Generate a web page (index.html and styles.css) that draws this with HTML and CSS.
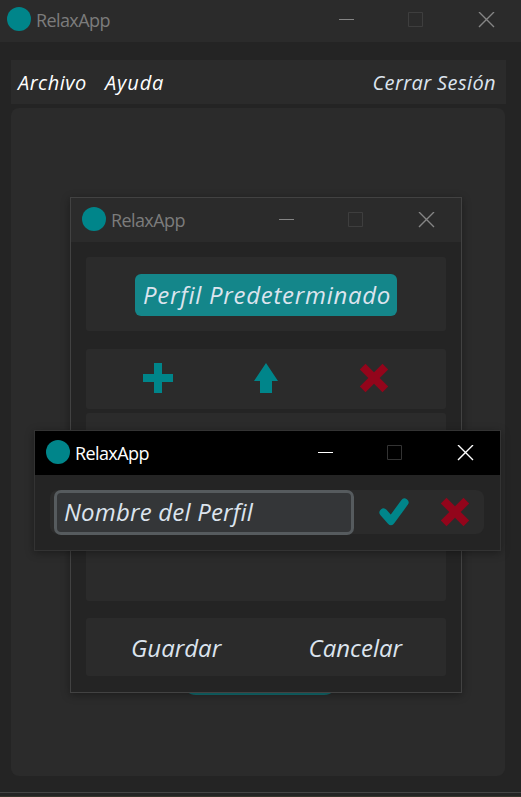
FILE: index.html
```html
<!DOCTYPE html>
<html lang="es">
<head>
<meta charset="utf-8">
<title>RelaxApp</title>
<link rel="stylesheet" href="styles.css">
</head>
<body>
<div class="desktop">
  <section class="main-window">
    <header class="titlebar">
      <span class="logo"></span><span class="title">RelaxApp</span>
      <svg class="controls" width="156" height="16" viewBox="0 0 156 16"><path d="M0 7.500h15"/><path class="maximize" d="M69.500 .5h14v14h-14z"/><path class="close" d="M140 0l15 15M155 0l-15 15"/></svg>
    </header>
    <nav class="menubar">
      <span class="menu-item archivo">Archivo</span>
      <span class="menu-item ayuda">Ayuda</span>
      <span class="menu-item logout">Cerrar Sesión</span>
    </nav>
    <main class="content"><span class="main-button"></span></main>
    <footer class="taskbar"></footer>
  </section>

  <section class="window profiles">
    <header class="titlebar">
      <span class="logo"></span><span class="title">RelaxApp</span>
      <svg class="controls" width="156" height="16" viewBox="0 0 156 16"><path d="M0 7.500h15"/><path class="maximize" d="M69.500 .5h14v14h-14z"/><path class="close" d="M140 0l15 15M155 0l-15 15"/></svg>
    </header>
    <div class="profiles-body">
      <div class="panel current"><span class="profile-chip"><span class="profile-name">Perfil Predeterminado</span></span></div>
      <div class="panel tools">
        <svg width="30" height="30" viewBox="0 0 30 30"><path class="teal" d="M11 0h8v11h11v8H19v11h-8V19H0v-8h11z"/></svg>
        <svg width="24" height="30" viewBox="0 0 24 30"><path class="teal" d="M12 0l12 18h-6v12H6V18H0z"/></svg>
        <svg width="30" height="30" viewBox="0 0 30 30"><path class="red" d="M6.500 .800L15 9.300 23.500 .800 29.200 6.500 20.700 15l8.500 8.500-5.700 5.700L15 20.700l-8.500 8.500L.8 23.500 9.300 15 .8 6.500z"/></svg>
      </div>
      <div class="panel list"></div>
      <div class="panel actions"><span class="save">Guardar</span><span class="cancel">Cancelar</span></div>
    </div>
  </section>

  <section class="window prompt">
    <header class="titlebar active">
      <span class="logo"></span><span class="title">RelaxApp</span>
      <svg class="controls" width="156" height="16" viewBox="0 0 156 16"><path d="M0 7.500h15"/><path class="maximize" d="M69.500 .5h14v14h-14z"/><path class="close" d="M140 0l15 15M155 0l-15 15"/></svg>
    </header>
    <div class="prompt-row">
      <div class="name-field"><span class="field-text">Nombre del Perfil</span></div>
      <svg class="check" width="30" height="28" viewBox="0 0 30 28"><path d="M4.500 14.500L12 23 25.500 4.500"/></svg>
      <svg width="30" height="30" viewBox="0 0 30 30"><path class="red" d="M6.500 .800L15 9.300 23.500 .800 29.200 6.500 20.700 15l8.500 8.500-5.700 5.700L15 20.700l-8.500 8.500L.8 23.500 9.300 15 .8 6.500z"/></svg>
    </div>
  </section>
</div>
</body>
</html>
```
FILE: styles.css
```css
* { box-sizing: border-box; }
body { margin: 0; background: #242424; color: #dce4ee; font: italic 24px/1 "Open Sans", "Noto Sans", sans-serif; overflow: hidden; }
svg { display: block; flex: none; }
span { white-space: nowrap; }
.desktop { position: relative; width: 521px; height: 797px; }
.main-window { display: flex; flex-direction: column; height: 797px; background: #242424; }

.titlebar { display: flex; flex: none; align-items: flex-start; height: 42px; padding: 7px 26px 0 7px; background: #2b2b2b; color: #7c7c7c; font: 18px/26px "Open Sans", sans-serif; }
.logo { width: 24px; height: 24px; border-radius: 50%; background: #00858a; }
.title { margin-left: 5px; letter-spacing: -0.6px; }
.controls { margin: 5px 0 0 auto; fill: none; stroke: #858585; stroke-width: 1; }
.controls .maximize { stroke: #3e3e3e; }
.controls .close { stroke-width: 1.4; }
.active { background: #000; color: #fff; }
.active .controls { stroke: #fff; }
.active .controls .maximize { stroke: #333; }

.menubar { display: flex; flex: none; height: 44px; margin: 18px 15px 4px 11px; padding: 0 10px 0 7px; background: #2b2b2b; font-size: 20px; line-height: 46px; }
.archivo, .ayuda { color: #fff; }
.archivo { width: 87px; letter-spacing: .5px; }
.ayuda { letter-spacing: .9px; }
.logout { margin-left: auto; letter-spacing: .4px; }
.content { display: flex; justify-content: center; align-items: flex-start; height: 668px; margin: 0 16px 0 11px; border-radius: 8px; background: #2b2b2b; }
.main-button { width: 156px; height: 40px; margin: 547px 0 0 4px; border-radius: 14px; background: #126e71; }
.taskbar { height: 5px; margin-top: 16px; border-top: 1px solid #444; border-bottom: 1px solid #35352b; }

.window { position: absolute; background: #242424; border: 1px solid #424242; box-shadow: 0 2px 8px rgba(0, 0, 0, .35); }
.window .titlebar { height: 44px; padding: 9px 26px 0 11px; }
.profiles { left: 70px; top: 197px; width: 392px; height: 496px; }
.profiles-body { display: flex; flex-direction: column; padding: 15px 15px 0; }
.panel { flex: none; border-radius: 3px; background: #2b2b2b; }
.current { display: flex; justify-content: center; height: 74px; padding-top: 17px; }
.profile-chip { width: 262px; height: 42px; padding-left: 8px; border-radius: 6px; background: #14868a; line-height: 42px; letter-spacing: .73px; }
.tools { display: flex; justify-content: space-between; align-items: flex-start; height: 60px; margin-top: 18px; padding: 14px 57px 0; }
.teal { fill: #00858a; }
.red { fill: #93051b; }
.list { height: 188px; margin-top: 4px; }
.actions { display: flex; height: 58px; margin-top: 17px; padding: 0 44px 0 45px; justify-content: space-between; line-height: 60px; }

.prompt { left: 34px; top: 430px; width: 467px; height: 121px; border-color: #333; }
.prompt-row { display: flex; align-items: center; height: 44px; margin: 15px 16px 0 15px; padding: 0 14px 0 4px; border-radius: 8px; background: #2b2b2b; }
.name-field { width: 300px; height: 45px; padding-left: 7px; border: 3px solid #565b5e; border-radius: 7px; background: #343638; line-height: 38px; letter-spacing: .2px; }
.check { margin: 0 31px 0 25px; fill: none; stroke: #00858a; stroke-width: 8; stroke-linecap: round; stroke-linejoin: round; }
```
